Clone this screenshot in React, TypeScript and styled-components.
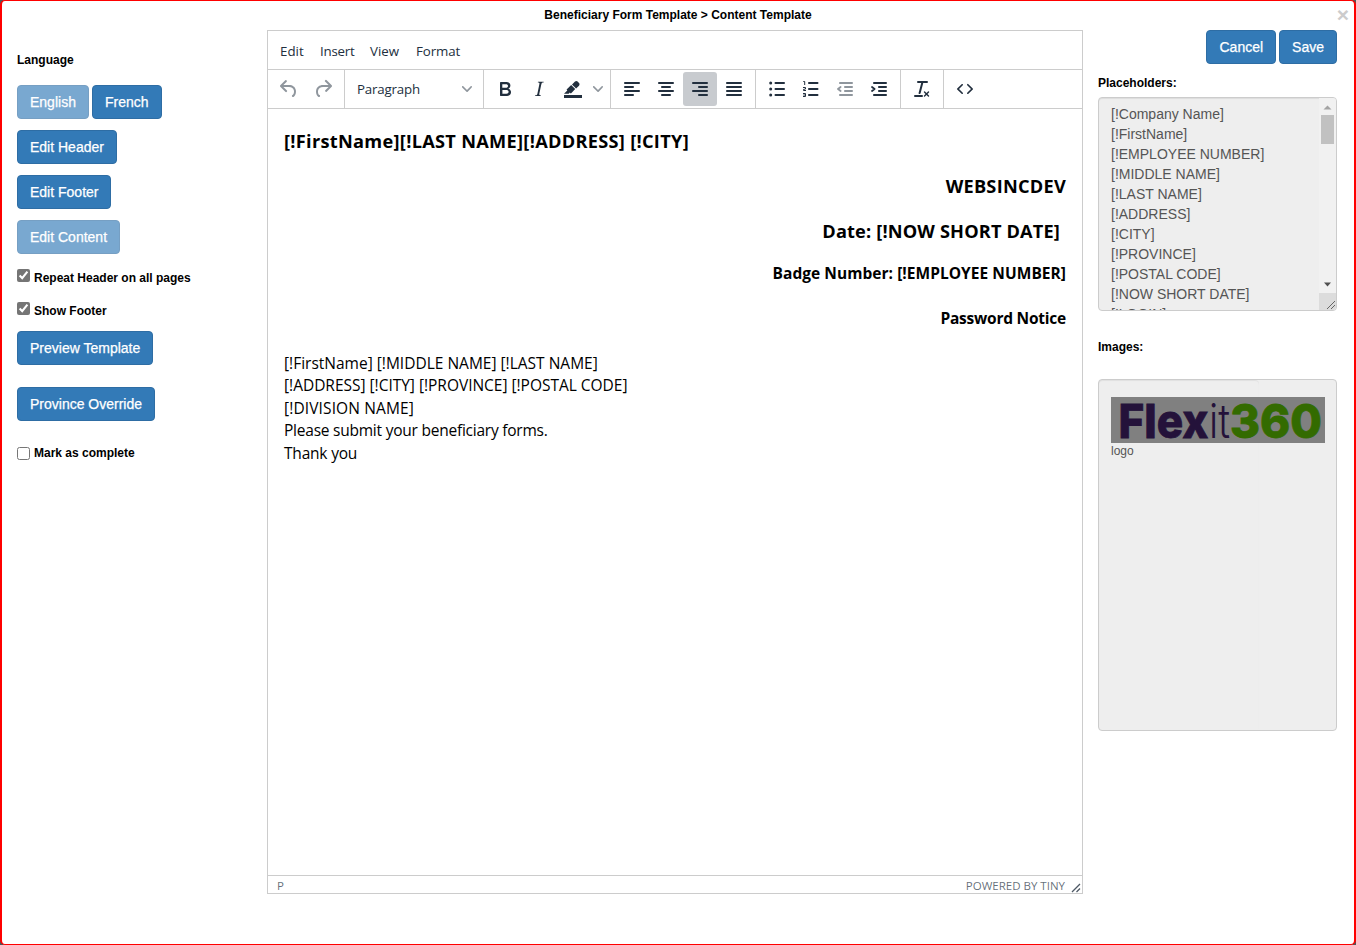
import React from "react";
import styled, { createGlobalStyle, css } from "styled-components";

const UI = '"Liberation Sans", Arial, sans-serif';
const EDITOR = '"Open Sans", "Noto Sans", sans-serif';
const INK = "#222f3e";

const Global = createGlobalStyle`
  * { box-sizing: border-box; }
  html, body { margin: 0; padding: 0; background: #555; }
  body { font-family: ${UI}; font-size: 12px; color: #000; overflow: hidden; }
`;

const Dialog = styled.div`
  width: 1356px;
  height: 945px;
  background: #fff;
  border: solid red;
  border-width: 1px 2px;
  border-radius: 5px;
  display: flex;
  flex-direction: column;
`;

const TitleBar = styled.header`
  height: 29px;
  flex: none;
  display: grid;
  grid-template-columns: 24px 1fr 24px;
`;

const Title = styled.h1`
  grid-column: 2;
  margin: 0;
  font-size: 12px;
  line-height: 28px;
  text-align: center;
`;

const Close = styled.button`
  height: 27px;
  border: 0;
  padding: 0 0 0 2px;
  background: none;
  color: #ccc;
  font: bold 21px/25px ${UI};
`;

const Columns = styled.div`
  flex: 1;
  display: grid;
  grid-template-columns: 235px 816px 239px;
  column-gap: 15px;
  padding-left: 15px;
`;

const Side = styled.aside`
  display: flex;
  flex-direction: column;
  align-items: flex-start;
`;

const Label = styled.span<{ $top: number; $bottom: number }>`
  font-weight: bold;
  line-height: 17px;
  margin: ${(p) => p.$top}px 0 ${(p) => p.$bottom}px;
`;

const ButtonRow = styled.div<{ $gap?: number; $end?: boolean }>`
  display: flex;
  gap: 3px;
  align-self: ${(p) => (p.$end ? "flex-end" : "flex-start")};
  margin-bottom: ${(p) => p.$gap ?? 11}px;
`;

const Button = styled.button`
  height: 34px;
  padding: 0 12px;
  border: 1px solid #2e6da4;
  border-radius: 4px;
  background: #337ab7;
  color: #fff;
  font: 14px/20px ${UI};
  -webkit-text-stroke: 0.25px #fff;
  white-space: nowrap;
  &:disabled { opacity: 0.65; }
`;

const CheckRow = styled.label<{ $gap: number; $drop?: number }>`
  display: flex;
  gap: 4px;
  height: 17px;
  margin-bottom: ${(p) => p.$gap}px;
  font-weight: bold;
  line-height: 19px;
  input {
    width: 13px;
    height: 13px;
    margin: ${(p) => p.$drop ?? 0}px 0 0;
    accent-color: #757575;
  }
`;

const Editor = styled.section`
  height: 864px;
  border: 1px solid #ccc;
  display: flex;
  flex-direction: column;
  font-family: ${EDITOR};
  color: ${INK};
`;

const MenuBar = styled.nav`
  height: 39px;
  flex: none;
  display: flex;
  padding-left: 12px;
  border-bottom: 1px solid #ccc;
  font-size: 13.3px;
  line-height: 40px;
`;

const MenuItem = styled.span<{ $w: number; $ls: number }>`
  width: ${(p) => p.$w}px;
  letter-spacing: ${(p) => p.$ls}px;
  white-space: nowrap;
`;

const Toolbar = styled.div`
  height: 39px;
  flex: none;
  display: flex;
  border-bottom: 1px solid #ccc;
`;

const Group = styled.div`
  display: flex;
  align-items: center;
  padding: 0 4px;
  border-right: 1px solid #ccc;
  &:last-child { border-right: 0; }
`;

const Tool = styled.button<{ $on?: boolean; $off?: boolean; $narrow?: boolean }>`
  width: ${(p) => (p.$narrow ? 16 : 34)}px;
  height: 34px;
  padding: 0;
  border: 0;
  border-radius: 3px;
  background: ${(p) => (p.$on ? "#c8cbcf" : "none")};
  color: ${INK};
  display: flex;
  align-items: center;
  justify-content: center;
  svg { flex: none; fill: currentColor; ${(p) => p.$off && css`opacity: 0.5;`} }
`;

const BlockSelect = styled.div`
  width: 130px;
  height: 34px;
  padding: 0 7px 0 8px;
  display: flex;
  align-items: center;
  justify-content: space-between;
  font-size: 13.3px;
  line-height: 36px;
  letter-spacing: -0.18px;
  svg { fill: ${INK}; opacity: 0.5; }
`;

const Page = styled.div`
  flex: 1;
  padding: 10px 16px 0;
  color: #000;
`;

const Line = styled.div<{ $h: number; $size: number; $bold?: boolean; $right?: boolean; $ls?: number; $inset?: number }>`
  height: ${(p) => p.$h}px;
  line-height: ${(p) => p.$h}px;
  font-size: ${(p) => p.$size}px;
  font-weight: ${(p) => (p.$bold ? 700 : 400)};
  text-align: ${(p) => (p.$right ? "right" : "left")};
  padding-right: ${(p) => p.$inset ?? 0}px;
  letter-spacing: ${(p) => p.$ls ?? 0}px;
  white-space: pre;
`;

const Letter = styled.div`
  margin-top: 8px;
`;

const StatusBar = styled.footer`
  height: 18px;
  flex: none;
  display: flex;
  padding: 0 1px 0 9px;
  border-top: 1px solid #ccc;
  font-size: 11.5px;
  line-height: 19px;
  color: rgba(34, 47, 62, 0.7);
  svg { margin-left: 6px; align-self: flex-end; }
`;

const Brand = styled.span`
  margin-left: auto;
`;

const ListBox = styled.div`
  width: 239px;
  height: 214px;
  border: 1px solid #ccc;
  border-radius: 4px;
  background: #eee;
  box-shadow: inset 0 1px 1px rgba(0, 0, 0, 0.075);
  display: flex;
  overflow: hidden;
`;

const Options = styled.ul`
  flex: 1;
  margin: 0;
  padding: 6px 0 0 12px;
  list-style: none;
  color: #555;
  font-size: 14px;
  line-height: 20px;
  white-space: nowrap;
`;

const Scrollbar = styled.div`
  width: 17px;
  display: flex;
  flex-direction: column;
  align-items: center;
  background: #f1f1f1;
  svg { display: block; flex: none; }
`;

const Thumb = styled.div`
  width: 13px;
  height: 29px;
  background: #c1c1c1;
  margin-bottom: auto;
`;

const Gallery = styled.div`
  width: 239px;
  height: 352px;
  border: 1px solid #ccc;
  border-radius: 4px;
  background: #eee;
`;

const GalleryInner = styled.div`
  width: 160px;
  height: 350px;
  padding: 17px 0 0 12px;
  border-radius: 4px;
  box-shadow: inset 0 1px 1px rgba(0, 0, 0, 0.06);
  color: #555;
  font: 12px/16px ${UI};
  svg { display: block; background: #808080; }
`;

const bars = (rows: number[][]) =>
  rows.map(([x, y, w]) => <rect key={`${x}-${y}`} x={x} y={y} width={w} height="2" rx="0.9" />);

const Icon = ({ children }: { children: React.ReactNode }) => (
  <svg width="24" height="24" viewBox="0 0 24 24">{children}</svg>
);

const Chevron = () => (
  <svg width="10" height="10" viewBox="0 0 10 10" opacity="0.5">
    <path d="M8.7 2.2c.3-.3.8-.3 1 0 .4.4.4.9 0 1.2L5.7 7.8c-.3.3-.9.3-1.2 0L.2 3.4a.8.8 0 010-1.2c.3-.3.8-.3 1.1 0L5 6l3.7-3.8z" />
  </svg>
);

const placeholders = [
  "Company Name", "FirstName", "EMPLOYEE NUMBER", "MIDDLE NAME", "LAST NAME", "ADDRESS",
  "CITY", "PROVINCE", "POSTAL CODE", "NOW SHORT DATE", "LOGIN",
];

export default function App() {
  return (
    <>
      <Global />
      <Dialog>
        <TitleBar>
          <Title>Beneficiary Form Template &gt; Content Template</Title>
          <Close>×</Close>
        </TitleBar>
        <Columns>
          <Side>
            <Label $top={22} $bottom={16}>Language</Label>
            <ButtonRow><Button disabled>English</Button><Button>French</Button></ButtonRow>
            <ButtonRow><Button>Edit Header</Button></ButtonRow>
            <ButtonRow><Button>Edit Footer</Button></ButtonRow>
            <ButtonRow $gap={15}><Button disabled>Edit Content</Button></ButtonRow>
            <CheckRow $gap={16}><input type="checkbox" defaultChecked />Repeat Header on all pages</CheckRow>
            <CheckRow $gap={12}><input type="checkbox" defaultChecked />Show Footer</CheckRow>
            <ButtonRow $gap={22}><Button>Preview Template</Button></ButtonRow>
            <ButtonRow $gap={23}><Button>Province Override</Button></ButtonRow>
            <CheckRow $gap={0} $drop={3}><input type="checkbox" />Mark as complete</CheckRow>
          </Side>
          <Editor>
            <MenuBar>
              <MenuItem $w={40} $ls={0}>Edit</MenuItem>
              <MenuItem $w={50} $ls={-0.2}>Insert</MenuItem>
              <MenuItem $w={46} $ls={0}>View</MenuItem>
              <MenuItem $w={50} $ls={-0.1}>Format</MenuItem>
            </MenuBar>
            <Toolbar>
              <Group>
                <Tool $off><Icon><path d="M6.4 8H12c3.7 0 6.2 2 6.8 5.1.6 2.7-.4 5.6-2.3 6.8a1 1 0 01-1-1.8c1.1-.6 1.8-2.7 1.4-4.6-.5-2.1-2.1-3.5-4.9-3.5H6.4l3.3 3.3a1 1 0 11-1.4 1.4l-5-5a1 1 0 010-1.4l5-5a1 1 0 011.4 1.4L6.4 8z" /></Icon></Tool>
                <Tool $off><Icon><path d="M17.6 10H12c-2.8 0-4.4 1.4-4.9 3.5-.4 2 .3 4 1.4 4.6a1 1 0 11-1 1.8c-2-1.2-2.9-4.1-2.3-6.8.6-3 3-5.1 6.8-5.1h5.6l-3.3-3.3a1 1 0 111.4-1.4l5 5a1 1 0 010 1.4l-5 5a1 1 0 01-1.4-1.4l3.3-3.3z" /></Icon></Tool>
              </Group>
              <Group><BlockSelect>Paragraph<Chevron /></BlockSelect></Group>
              <Group>
                <Tool><Icon><path d="M7.8 19c-.3 0-.5 0-.6-.2l-.2-.5V5.7c0-.2 0-.4.2-.5l.6-.2h5c1.5 0 2.7.3 3.5 1 .7.6 1.1 1.4 1.1 2.5a3 3 0 01-.6 1.9c-.4.6-1 1-1.6 1.2.4.1.9.3 1.3.6s.8.7 1 1.2c.4.4.5 1 .5 1.6 0 1.3-.4 2.3-1.3 3-.8.7-2.1 1-3.8 1H7.8zm5-8.3c.6 0 1.2-.1 1.6-.5.4-.3.6-.7.6-1.3 0-1.1-.8-1.7-2.3-1.7H9.3v3.5h3.4zm.5 6c.7 0 1.3-.1 1.7-.4.4-.4.6-.9.6-1.5s-.2-1-.7-1.4c-.4-.3-1-.4-2-.4H9.4v3.8h4z" /></Icon></Tool>
                <Tool><Icon><path d="M16.7 4.7l-.1.9h-.3c-.6 0-1 0-1.4.3-.3.3-.4.6-.5 1.1l-2.1 9.8v.6c0 .5.4.8 1.4.8h.2l-.2.8H8l.2-.8h.2c1.1 0 1.8-.5 2-1.5l2-9.8.1-.5c0-.6-.4-.8-1.4-.8h-.3l.2-.9h5.8z" /></Icon></Tool>
                <Tool><Icon><path d="M3 18h18v3H3z" /><path d="M7.7 16.7H3l3.3-3.3-.7-.8L10.2 8l4 4.1-4 4.2c-.2.2-.6.2-.8 0l-.6-.7-1.1 1.1zm5-7.5L11 7.4l3-2.9a2 2 0 012.6 0L18 6c.7.7.7 2 0 2.7l-2.9 2.9-1.8-1.8-.5-.6" /></Icon></Tool>
                <Tool $narrow><Chevron /></Tool>
              </Group>
              <Group>
                <Tool><Icon>{bars([[4, 5, 16], [4, 9, 10], [4, 13, 16], [4, 17, 10]])}</Icon></Tool>
                <Tool><Icon>{bars([[4, 5, 16], [7, 9, 10], [4, 13, 16], [7, 17, 10]])}</Icon></Tool>
                <Tool $on><Icon>{bars([[4, 5, 16], [10, 9, 10], [4, 13, 16], [10, 17, 10]])}</Icon></Tool>
                <Tool><Icon>{bars([[4, 5, 16], [4, 9, 16], [4, 13, 16], [4, 17, 16]])}</Icon></Tool>
              </Group>
              <Group>
                <Tool><Icon>{bars([[9.5, 5, 10.5], [9.5, 11, 10.5], [9.5, 17, 10.5]])}<circle cx="5.7" cy="6" r="1.5" /><circle cx="5.7" cy="12" r="1.5" /><circle cx="5.7" cy="18" r="1.5" /></Icon></Tool>
                <Tool><Icon>{bars([[9, 5, 10.5], [9, 11, 10.5], [9, 17, 10.5]])}<path fill="none" stroke="currentColor" d="M4.3 4.5h1.4V8M4 10.5h2.5V12l-2 .4v1.1H7M4 16.5h2.5v3H4M4.3 18h2.2" /></Icon></Tool>
                <Tool $off><Icon>{bars([[6, 5, 14], [11, 9, 9], [11, 13, 9], [6, 17, 14]])}<path fill="none" stroke="currentColor" strokeWidth="1.8" strokeLinecap="round" strokeLinejoin="round" d="M7.6 10L5 12l2.6 2" /></Icon></Tool>
                <Tool><Icon>{bars([[6, 5, 14], [11, 9, 9], [11, 13, 9], [6, 17, 14]])}<path fill="none" stroke="currentColor" strokeWidth="1.8" strokeLinecap="round" strokeLinejoin="round" d="M5 10l2.6 2L5 14" /></Icon></Tool>
              </Group>
              <Group>
                <Tool><Icon><path d="M13.2 6a1 1 0 010 .2l-2.6 10a1 1 0 01-1 .8h-.2a.8.8 0 01-.8-1l2.6-10H8a1 1 0 110-2h9a1 1 0 010 2h-3.8zM5 18h7a1 1 0 010 2H5a1 1 0 010-2zm13 1.5L16.5 18 15 19.5a.7.7 0 01-1-1l1.5-1.5-1.5-1.5a.7.7 0 011-1l1.5 1.5 1.5-1.5a.7.7 0 011 1L17.500 17l1.5 1.5a.7.7 0 01-1 1z" /></Icon></Tool>
              </Group>
              <Group>
                <Tool><Icon><path d="M9.8 15.7c.3.3.3.8 0 1-.3.4-.9.4-1.2 0l-4.4-4.1a.8.8 0 010-1.2l4.4-4.2c.3-.3.9-.3 1.2 0 .3.3.3.8 0 1.1L6 12l3.8 3.7zM14.2 15.7c-.3.3-.3.8 0 1 .4.4.9.4 1.2 0l4.4-4.1c.3-.3.3-.8 0-1.2l-4.4-4.2a.8.8 0 00-1.2 0c-.3.3-.3.8 0 1.1L18 12l-3.8 3.7z" /></Icon></Tool>
              </Group>
            </Toolbar>
            <Page>
              <Line $h={45} $size={18.2} $ls={0.29} $bold>[!FirstName][!LAST NAME][!ADDRESS] [!CITY]</Line>
              <Line $h={45} $size={18.2} $ls={0.25} $bold $right>WEBSINCDEV</Line>
              <Line $h={45} $size={18.2} $ls={0.15} $bold $right $inset={6}>Date: [!NOW SHORT DATE]</Line>
              <Line $h={39} $size={15.5} $ls={0.04} $bold $right>Badge Number: [!EMPLOYEE NUMBER]</Line>
              <Line $h={51} $size={15.5} $ls={-0.23} $bold $right>Password Notice</Line>
              <Letter>
                <Line $h={22.4} $size={15.5}>[!FirstName] [!MIDDLE NAME] [!LAST NAME]</Line>
                <Line $h={22.4} $size={15.5} $ls={-0.02}>[!ADDRESS] [!CITY] [!PROVINCE] [!POSTAL CODE]</Line>
                <Line $h={22.4} $size={15.5} $ls={0.12}>[!DIVISION NAME]</Line>
                <Line $h={22.4} $size={15.5} $ls={-0.23}>Please submit your beneficiary forms.</Line>
                <Line $h={22.4} $size={15.5} $ls={-0.2}>Thank you</Line>
              </Letter>
            </Page>
            <StatusBar>
              P
              <Brand>POWERED BY TINY</Brand>
              <svg width="10" height="10" viewBox="0 0 10 10" fill="none" stroke={INK} strokeOpacity="0.8" strokeWidth="1.3"><path d="M1 9L9 1M5.5 9L9 5.5" /></svg>
            </StatusBar>
          </Editor>
          <Side>
            <ButtonRow $end><Button>Cancel</Button><Button>Save</Button></ButtonRow>
            <Label $top={0} $bottom={5}>Placeholders:</Label>
            <ListBox>
              <Options>{placeholders.map((p) => <li key={p}>[!{p}]</li>)}</Options>
              <Scrollbar>
                <svg width="17" height="17"><path d="M4.5 11.5h8l-4-4z" fill="#a3a3a3" /></svg>
                <Thumb />
                <svg width="17" height="17"><path d="M5 6.5h7l-3.5 4z" fill="#505050" /></svg>
                <svg width="17" height="17"><path d="M0 0h17v17H0z" fill="#dcdcdc" /><path d="M8 16l8-8M12 16l4-4" stroke="#666" /></svg>
              </Scrollbar>
            </ListBox>
            <Label $top={28} $bottom={23}>Images:</Label>
            <Gallery>
              <GalleryInner>
                <svg width="214" height="46" viewBox="0 0 214 46" fontFamily="Inter, sans-serif" fontSize="47">
                  <text x="7.5" y="41" fontWeight="800" fill="#24123a" stroke="#24123a" strokeWidth="0.8" textLength="90" lengthAdjust="spacingAndGlyphs">Flex</text>
                  <text x="98" y="41" fontWeight="300" fill="#24123a" textLength="21" lengthAdjust="spacingAndGlyphs">it</text>
                  <text x="119" y="41" fontWeight="800" fill="#336b00" stroke="#336b00" strokeWidth="0.8" textLength="92" lengthAdjust="spacingAndGlyphs">360</text>
                </svg>
                logo
              </GalleryInner>
            </Gallery>
          </Side>
        </Columns>
      </Dialog>
    </>
  );
}
